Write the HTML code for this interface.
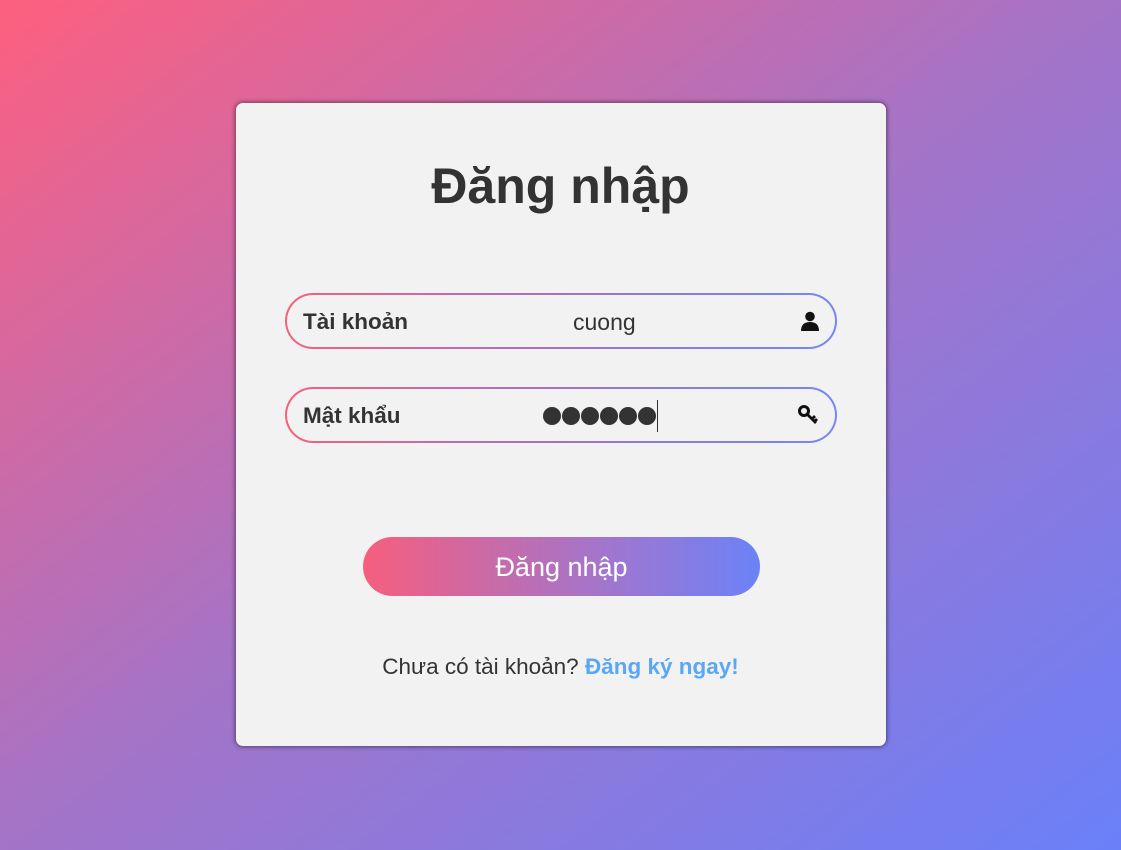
<!DOCTYPE html>
<html><head><meta charset="utf-8"><style>
html,body{margin:0;width:1121px;height:850px;overflow:hidden}
body{background:linear-gradient(to bottom right,#fe5f7e,#a374c8 50%,#6a80f9);font-family:"Liberation Sans","DejaVu Sans",sans-serif;position:relative}
.card{position:absolute;left:236px;top:103px;width:650px;height:643px;background:#f2f2f2;border-radius:7px;box-shadow:0 0 4px 1px rgba(0,0,0,.45)}
h1{position:absolute;left:0;right:0;top:156px;margin:0;text-align:center;font-size:50px;font-weight:bold;color:#333;line-height:60px}
.inp{position:absolute;left:285px;width:552px;height:56px;border-radius:30px;background:linear-gradient(90deg,#f5607e,#a173c9 50%,#7487f6);}
.inp .in{position:absolute;inset:2px;border-radius:28px;background:#f2f2f2}
.lab{position:absolute;left:16px;top:1px;line-height:52px;font-size:22.5px;font-weight:bold;color:#333}
.val{position:absolute;left:286px;top:1px;line-height:52px;font-size:23px;color:#333}
.icon{position:absolute;right:14px;top:15px}
.dots{position:absolute;left:256px;top:16px;height:22px;display:flex;align-items:center}
.dots i{display:block;width:18px;height:18px;border-radius:50%;background:#333;margin-right:1px}
.cur{width:1px;height:32px;background:#333;margin-left:0}
.btn{position:absolute;left:363px;top:537px;width:397px;height:59px;border-radius:30px;background:linear-gradient(90deg,#f65e7e,#9c77d2 65%,#6b82f6);color:#fff;text-align:center;line-height:60px;font-size:27px}
.foot{position:absolute;left:0;right:0;top:654px;text-align:center;font-size:22.5px;color:#333}
.foot b{color:#5aa8f5}
</style></head><body>
<div class="card"></div>
<h1>Đăng nhập</h1>
<div class="inp" style="top:293px"><div class="in">
<div class="lab">Tài khoản</div><div class="val">cuong</div>
<svg class="icon" width="22" height="22" viewBox="0 0 22 22"><circle cx="11" cy="6.5" r="4.8" fill="#111"/><path d="M2 21 Q2 12 11 12 Q20 12 20 21Z" fill="#111"/></svg>
</div></div>
<div class="inp" style="top:387px"><div class="in">
<div class="lab">Mật khẩu</div>
<div class="dots"><i></i><i></i><i></i><i></i><i></i><i></i><span class="cur"></span></div>
<svg class="icon" width="24" height="22" viewBox="0 0 24 22"><circle cx="7" cy="7" r="4.5" fill="none" stroke="#111" stroke-width="3"/><path d="M10 10 L19 19 M15 15 L18 12 M17.5 17.5 L20 15" stroke="#111" stroke-width="2.8" fill="none"/></svg>
</div></div>
<div class="btn">Đăng nhập</div>
<div class="foot">Chưa có tài khoản? <b>Đăng ký ngay!</b></div>
</body></html>
